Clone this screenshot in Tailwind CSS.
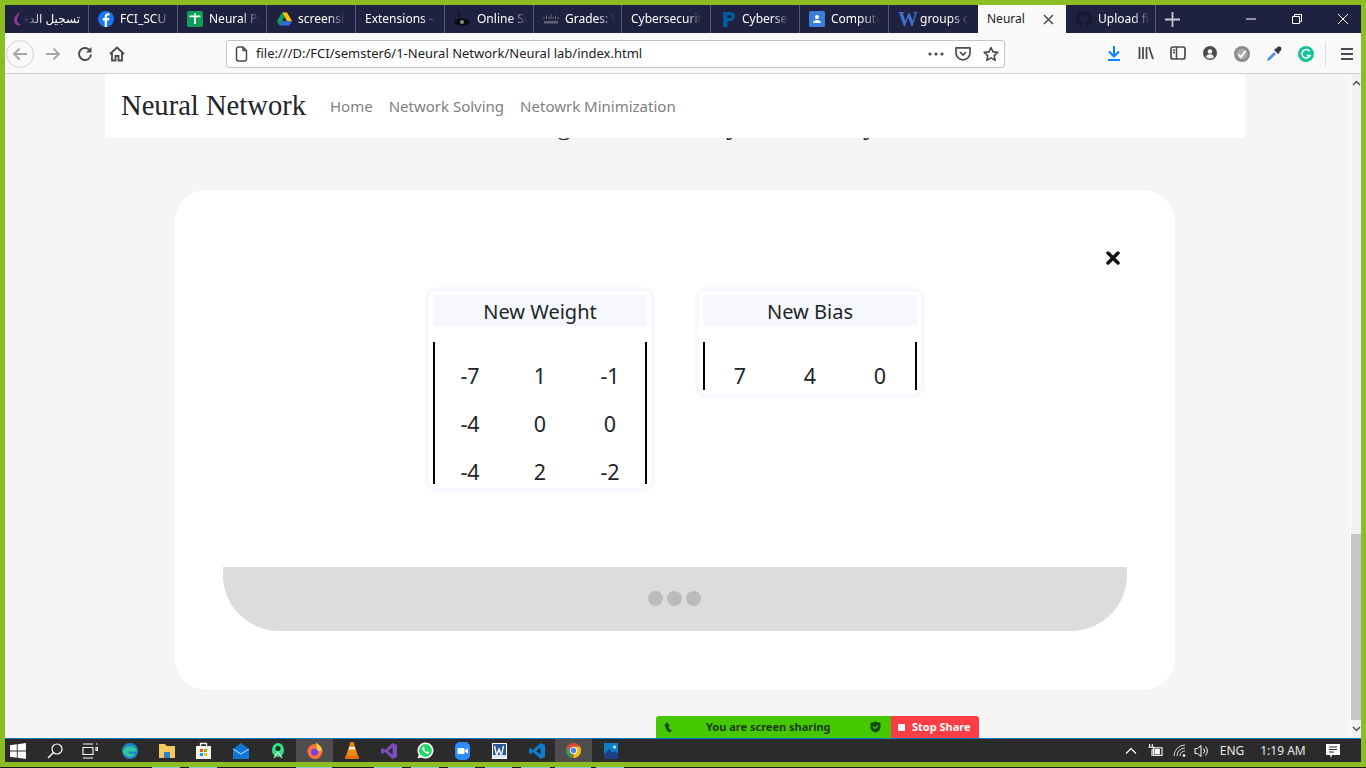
<!DOCTYPE html>
<html lang="en">
<head>
  <meta charset="UTF-8" />
  <title>Neural Network</title>
  <script src="https://cdn.jsdelivr.net/npm/@tailwindcss/browser@4"></script>
</head>
<body class="bg-[#8cbd22] overflow-hidden font-['Noto_Sans','DejaVu_Sans',sans-serif]">
<div class="w-[1366px] h-[768px] flex flex-col pt-[5px] px-[5px]">

  <!-- tabs -->
  <div class="h-[28px] bg-[#1f2141] flex text-white text-[12px] shrink-0">
    <div class="w-[84px] flex items-center border-r border-[#5a5c75] pl-[7px]">
      <svg width="11" height="16" viewBox="0 0 11 16"><path d="M8 1 C3 4 1 8 3 12 C4 15 8 15 9 13 C7 13 5 12 5 9 C5 6 7 4 8 1Z" fill="#8e3f97"/></svg>
      <span class="w-[57px] whitespace-nowrap overflow-hidden text-right [mask-image:linear-gradient(to_left,black_65%,transparent)]" dir="rtl">تسجيل الدخول</span>
    </div>
    <div class="w-[89px] flex items-center border-r border-[#5a5c75] pl-[9px] gap-[6px]">
      <svg width="16" height="16" viewBox="0 0 16 16"><circle cx="8" cy="8" r="8" fill="#1877f2"/><path d="M9 16V9.5h2l.4-2.4H9V5.8c0-.8.3-1.2 1.2-1.2h1.2V2.500C11 2.400 10.400 2.300 9.800 2.300 8 2.300 6.700 3.400 6.700 5.500v1.600H4.700v2.400h2V16z" fill="#fff"/></svg>
      <span class="w-[50px] whitespace-nowrap overflow-hidden [mask-image:linear-gradient(to_right,black_70%,transparent)]">FCI_SCU</span>
    </div>
    <div class="w-[89px] flex items-center border-r border-[#5a5c75] pl-[9px] gap-[6px]">
      <svg width="16" height="16" viewBox="0 0 16 16"><rect width="16" height="16" rx="1.500" fill="#0f9d58"/><path d="M2.500 4.500h11v1.800h-4.600V13H7.100V6.300H2.500z" fill="#fff"/><path d="M7.100 2.500h1.800v2H7.100z" fill="#fff"/></svg>
      <span class="w-[50px] whitespace-nowrap overflow-hidden [mask-image:linear-gradient(to_right,black_65%,transparent)]">Neural Project</span>
    </div>
    <div class="w-[89px] flex items-center border-r border-[#5a5c75] pl-[10px] gap-[6px]">
      <svg width="15" height="14" viewBox="0 0 15 14"><path d="M5 0.500h5L15 9h-5z" fill="#ffc107"/><path d="M5 0.500L0 9l2.500 4.500L7.500 5z" fill="#0f9d58"/><path d="M2.500 13.500h10L15 9H5z" fill="#2f6fe0"/></svg>
      <span class="w-[47px] whitespace-nowrap overflow-hidden [mask-image:linear-gradient(to_right,black_65%,transparent)]">screenshot</span>
    </div>
    <div class="w-[89px] flex items-center border-r border-[#5a5c75] pl-[9px]">
      <span class="w-[70px] whitespace-nowrap overflow-hidden [mask-image:linear-gradient(to_right,black_80%,transparent)]">Extensions – Add</span>
    </div>
    <div class="w-[89px] flex items-center border-r border-[#5a5c75] pl-[9px] gap-[7px]">
      <svg width="16" height="16" viewBox="0 0 16 16"><path d="M4 1c1-1 2 0 2 1v7H4z" fill="#15162c"/><ellipse cx="8" cy="11" rx="8" ry="3.500" fill="#0b0b0d"/><circle cx="8" cy="11" r="2" fill="#888"/></svg>
      <span class="w-[50px] whitespace-nowrap overflow-hidden [mask-image:linear-gradient(to_right,black_65%,transparent)]">Online Surveys</span>
    </div>
    <div class="w-[88px] flex items-center border-r border-[#5a5c75] pl-[9px] gap-[6px]">
      <svg width="16" height="10" viewBox="0 0 16 10"><path d="M1 3v2M3.500 1.500v3.500M6 3v2M8 .5v4.500M10 3v2M12.500 1.500v3.500M15 3v2" stroke="#6d6f85" stroke-width="1"/><rect x="1" y="7" width="14" height="2.500" fill="#5e6078"/></svg>
      <span class="w-[50px] whitespace-nowrap overflow-hidden [mask-image:linear-gradient(to_right,black_65%,transparent)]">Grades: Week</span>
    </div>
    <div class="w-[89px] flex items-center border-r border-[#5a5c75] pl-[9px]">
      <span class="w-[70px] whitespace-nowrap overflow-hidden [mask-image:linear-gradient(to_right,black_80%,transparent)]">Cybersecurity</span>
    </div>
    <div class="w-[89px] flex items-center border-r border-[#5a5c75] pl-[11px] gap-[6px]">
      <svg width="14" height="15" viewBox="0 0 14 15"><path d="M1 0h7c3.500 0 5 2 5 4.500S11 9 8 9H5.500v6H1z M5.500 3v3H8c1 0 1.500-.7 1.500-1.500S9 3 8 3z" fill="#005c9e" fill-rule="evenodd"/></svg>
      <span class="w-[47px] whitespace-nowrap overflow-hidden [mask-image:linear-gradient(to_right,black_65%,transparent)]">Cybersecurity</span>
    </div>
    <div class="w-[89px] flex items-center border-r border-[#5a5c75] pl-[9px] gap-[6px]">
      <svg width="16" height="16" viewBox="0 0 16 16"><rect width="16" height="16" rx="1.500" fill="#3b7ddd"/><circle cx="8" cy="6" r="2" fill="#fff"/><path d="M4 12c0-2 2-3 4-3s4 1 4 3z" fill="#fff"/></svg>
      <span class="w-[48px] whitespace-nowrap overflow-hidden [mask-image:linear-gradient(to_right,black_65%,transparent)]">Computer</span>
    </div>
    <div class="w-[89px] flex items-center pl-[9px] gap-[6px]">
      <span class="w-[16px] text-[20px] leading-none font-bold text-[#3f72cf] font-['Liberation_Serif',serif]">W</span>
      <span class="w-[48px] whitespace-nowrap overflow-hidden [mask-image:linear-gradient(to_right,black_65%,transparent)]">groups on</span>
    </div>
    <div class="w-[88px] flex items-center justify-between bg-[#f9f9fa] text-[#1c1b22] pl-[9px] pr-[12px]">
      <span>Neural</span>
      <svg width="11" height="11" viewBox="0 0 11 11"><path d="M1 1l9 9M10 1l-9 9" stroke="#4a4a4f" stroke-width="1.500"/></svg>
    </div>
    <div class="w-[90px] flex items-center border-r border-[#5a5c75] pl-[10px] gap-[6px]">
      <svg width="16" height="16" viewBox="0 0 16 16"><path d="M8 0a8 8 0 0 0-2.500 15.600c.4.1.5-.2.5-.4v-1.400c-2.200.5-2.700-1-2.700-1-.4-.9-.9-1.200-.9-1.200-.7-.5.1-.5.1-.5.8.1 1.200.8 1.200.8.7 1.200 1.900.9 2.300.7.1-.5.300-.9.500-1.100-1.800-.2-3.600-.9-3.600-4 0-.9.300-1.600.8-2.100-.1-.2-.4-1 .1-2.100 0 0 .7-.2 2.200.8a7.500 7.500 0 0 1 4 0c1.500-1 2.200-.8 2.200-.8.4 1.100.2 1.900.1 2.100.5.600.8 1.300.8 2.100 0 3.100-1.900 3.700-3.700 3.900.3.300.6.800.6 1.500v2.200c0 .2.100.5.600.4A8 8 0 0 0 8 0z" fill="#15162c"/></svg>
      <span class="w-[52px] whitespace-nowrap overflow-hidden [mask-image:linear-gradient(to_right,black_65%,transparent)]">Upload files</span>
    </div>
    <div class="flex-1 flex items-center pl-[9px]">
      <svg width="15" height="15" viewBox="0 0 15 15"><path d="M7.500 0v15M0 7.500h15" stroke="#c9cad4" stroke-width="1.800"/></svg>
      <div class="ml-auto -mr-[5px] flex items-center">
        <svg class="w-[46px]" width="46" height="10" viewBox="0 0 46 10"><path d="M18 5h10" stroke="#fff" stroke-width="1"/></svg>
        <svg class="w-[46px]" width="46" height="10" viewBox="0 0 46 10"><path d="M18.500 2.500h7v7h-7zM20.500 2.500V.5h7v7h-2" fill="none" stroke="#fff" stroke-width="1"/></svg>
        <svg class="w-[46px]" width="46" height="10" viewBox="0 0 46 10"><path d="M18 0l10 10M28 0L18 10" stroke="#fff" stroke-width="1"/></svg>
      </div>
    </div>
  </div>

  <!-- toolbar -->
  <div class="h-[41px] pt-[1px] bg-[#f9f9fa] border-b border-[#cfcfd0] flex items-center shrink-0 text-[#4a4a4f]">
    <div class="ml-px w-[28px] h-[28px] rounded-full border border-[#d2d2d2] flex items-center justify-center">
      <svg width="16" height="14" viewBox="0 0 16 14"><path d="M15 7H2M7.500 1.500L2 7l5.500 5.500" fill="none" stroke="#a6a6a8" stroke-width="1.800"/></svg>
    </div>
    <div class="ml-[3px] w-[32px] flex justify-center">
      <svg width="16" height="14" viewBox="0 0 16 14"><path d="M1 7h13M8.500 1.500L14 7l-5.500 5.500" fill="none" stroke="#a6a6a8" stroke-width="1.800"/></svg>
    </div>
    <div class="w-[32px] flex justify-center">
      <svg width="16" height="16" viewBox="0 0 16 16"><path d="M14 8.500a6 6 0 1 1-2-5" fill="none" stroke="#4a4a4f" stroke-width="2"/><path d="M14.500 1v5.500H9z" fill="#4a4a4f"/></svg>
    </div>
    <div class="w-[32px] flex justify-center">
      <svg width="16" height="16" viewBox="0 0 16 16"><path d="M1 8l7-6.500L15 8M3 7v7.500h3.500V10h3v4.500H13V7" fill="none" stroke="#4a4a4f" stroke-width="1.800"/></svg>
    </div>
    <div class="ml-[93px] w-[779px] h-[28px] bg-white border border-[#c4c4c5] rounded-[3px] flex items-center pl-[8px] pr-[5px]">
      <svg width="13" height="16" viewBox="0 0 13 16"><path d="M1.500 3a2 2 0 0 1 2-2h4.500l3.500 3.500V13a2 2 0 0 1-2 2h-6a2 2 0 0 1-2-2z M8 1v3.500h3.500" fill="none" stroke="#4a4a4f" stroke-width="1.500"/></svg>
      <span class="ml-[8px] text-[13px] pt-[1px] text-[#1c1b22] whitespace-nowrap">file:///D:/FCI/semster6/1-Neural Network/Neural lab/index.html</span>
      <svg class="ml-auto" width="16" height="4" viewBox="0 0 16 4"><circle cx="2" cy="2" r="1.600" fill="#4a4a4f"/><circle cx="8" cy="2" r="1.600" fill="#4a4a4f"/><circle cx="14" cy="2" r="1.600" fill="#4a4a4f"/></svg>
      <svg class="ml-[11px]" width="16" height="15" viewBox="0 0 16 15"><path d="M1 1.800h14v5a7 7 0 0 1-14 0z" fill="none" stroke="#4a4a4f" stroke-width="1.700" stroke-linejoin="round"/><path d="M5 6l3 3 3-3" fill="none" stroke="#4a4a4f" stroke-width="1.700"/></svg>
      <svg class="ml-[12px]" width="16" height="16" viewBox="0 0 16 16"><path d="M8 1.500l2 4.400 4.800.5-3.600 3.200 1 4.700L8 11.900l-4.200 2.400 1-4.700L1.200 6.400 6 5.900z" fill="none" stroke="#4a4a4f" stroke-width="1.600" stroke-linejoin="round"/></svg>
    </div>
    <div class="ml-[93px] flex">
      <div class="w-[32px] flex justify-center"><svg width="14" height="15" viewBox="0 0 14 15"><path d="M7 0v9.500M2 5.500l5 5 5-5M1 14h12" fill="none" stroke="#0a84ff" stroke-width="2"/></svg></div>
      <div class="w-[32px] flex justify-center"><svg width="16" height="14" viewBox="0 0 16 14"><path d="M1.500 1v12M5 1v12M8.500 1v12M11 1l4 12" fill="none" stroke="#4a4a4f" stroke-width="1.800"/></svg></div>
      <div class="w-[32px] flex justify-center"><svg width="16" height="14" viewBox="0 0 16 14"><rect x="1" y="1" width="14" height="12" rx="2" fill="none" stroke="#4a4a4f" stroke-width="1.700"/><path d="M6.500 1v12M3 4h2M3 6.500h2" stroke="#4a4a4f" stroke-width="1.500"/></svg></div>
      <div class="w-[32px] flex justify-center"><svg width="14" height="14" viewBox="0 0 14 14"><circle cx="7" cy="7" r="7" fill="#4a4a4f"/><circle cx="7" cy="5.500" r="2.300" fill="#f9f9fa"/><path d="M2.800 11c.6-2 2.400-2.800 4.200-2.800s3.600.8 4.200 2.800A6 6 0 0 1 7 12.500 6 6 0 0 1 2.800 11z" fill="#f9f9fa"/></svg></div>
      <div class="w-[32px] flex justify-center"><svg width="16" height="16" viewBox="0 0 16 16"><circle cx="8" cy="8" r="8" fill="#8a8a8c"/><circle cx="8" cy="8" r="5.500" fill="#a9a9ab"/><path d="M4.500 8.500l2.500 2.500 4.500-6" fill="none" stroke="#fff" stroke-width="2"/></svg></div>
      <div class="w-[32px] flex justify-center"><svg width="16" height="16" viewBox="0 0 16 16"><path d="M1 15l1-3 6-6 2 2-6 6z" fill="#4f8fe6"/><path d="M9 3l4 4" stroke="#33333a" stroke-width="2.500"/><circle cx="13" cy="3" r="2.400" fill="#33333a"/></svg></div>
      <div class="w-[32px] flex justify-center"><svg width="16" height="16" viewBox="0 0 16 16"><circle cx="8" cy="8" r="8" fill="#15c39a"/><path d="M11.500 5.200A4.200 4.200 0 1 0 12 9.500H8.800" fill="none" stroke="#fff" stroke-width="1.600"/></svg></div>
    </div>
    <div class="ml-[3px] w-px h-[24px] bg-[#dcdcdc]"></div>
    <div class="ml-[15px] flex flex-col gap-[3px]">
      <div class="w-[12px] h-[2px] bg-[#4a4a4f]"></div>
      <div class="w-[12px] h-[2px] bg-[#4a4a4f]"></div>
      <div class="w-[12px] h-[2px] bg-[#4a4a4f]"></div>
    </div>
  </div>

  <!-- page -->
  <div class="h-[664px] flex shrink-0 relative overflow-hidden">
    <div class="w-[1345px] bg-[#f5f5f5] overflow-hidden relative">
      <!-- heading scrolled under the navbar -->
      <div class="absolute top-[34px] left-[552px] flex font-['Liberation_Serif',serif] text-[28px] leading-[34px] text-[#212529]">
        <span>g</span><span class="ml-[155px]">y</span><span class="ml-[123px]">y</span>
      </div>
      <nav class="relative ml-[100px] w-[1140px] h-[64px] bg-white flex items-center pl-[16px]">
        <span class="font-['Liberation_Serif',serif] text-[28.6px] text-[#212529] w-[209px] whitespace-nowrap">Neural Network</span>
        <div class="flex gap-[16px] text-[15px] text-[#808080]">
          <span>Home</span>
          <span>Network Solving</span>
          <span>Netowrk Minimization</span>
        </div>
      </nav>
      <div class="mt-[52px] ml-[170px] w-[1000px] h-[500px] bg-white rounded-[32px] pt-[58px] pb-[59px] px-[48px] flex flex-col">
        <div class="h-[20px] flex items-center justify-end pr-[6px]">
          <svg width="16" height="16" viewBox="0 0 16 16"><path d="M3 3l10 10M13 3L3 13" stroke="#111" stroke-width="3.500" stroke-linecap="round"/></svg>
        </div>
        <div class="mt-[19px] ml-[202px] flex items-start gap-[40px] text-[20px] text-[#212529]">
          <div class="w-[230px] border-[4px] border-[#f8f8ff] rounded-[12px] p-[4px]">
            <div class="h-[31px] pt-[2px] bg-[#f7f8fd] flex items-center justify-center">New Weight</div>
            <div class="mt-[16px] h-[142px] border-x-2 border-black pt-[22px] grid grid-cols-3 gap-y-[24px] leading-[24px] text-[21.5px] text-center content-start">
              <span>-7</span><span>1</span><span>-1</span>
              <span>-4</span><span>0</span><span>0</span>
              <span>-4</span><span>2</span><span>-2</span>
            </div>
          </div>
          <div class="w-[230px] border-[4px] border-[#f8f8ff] rounded-[12px] p-[4px]">
            <div class="h-[31px] pt-[2px] bg-[#f7f8fd] flex items-center justify-center">New Bias</div>
            <div class="mt-[16px] h-[48px] border-x-2 border-black pt-[22px] grid grid-cols-3 leading-[24px] text-[21.5px] text-center content-start">
              <span>7</span><span>4</span><span>0</span>
            </div>
          </div>
        </div>
        <div class="mt-auto h-[64px] pb-[2px] bg-[#dcdcdc] rounded-b-[56px] flex items-center justify-center gap-[4px] pr-[1px]">
          <span class="w-[15px] h-[15px] rounded-full bg-[#bbbbbb]"></span>
          <span class="w-[15px] h-[15px] rounded-full bg-[#bbbbbb]"></span>
          <span class="w-[15px] h-[15px] rounded-full bg-[#bbbbbb]"></span>
        </div>
      </div>
    </div>
    <!-- scrollbar -->
    <div class="w-[11px] bg-[#f1f1f1] border-l border-white flex flex-col">
      <div class="h-[460px] pt-[6px] flex justify-center"><svg width="9" height="6" viewBox="0 0 9 6"><path d="M1 5l3.500-3.500L8 5" fill="none" stroke="#505050" stroke-width="1.500"/></svg></div>
      <div class="h-[186px] bg-[#c6c6c6]"></div>
      <div class="flex-1 flex items-center justify-center"><svg width="9" height="6" viewBox="0 0 9 6"><path d="M1 1l3.500 3.500L8 1" fill="none" stroke="#505050" stroke-width="1.500"/></svg></div>
    </div>
    <!-- zoom share bar -->
    <div class="absolute left-[651px] bottom-0 w-[323px] h-[22px] rounded-t-[3px] overflow-hidden flex text-[11px] font-bold">
      <div class="w-[235px] bg-[#46c800] flex items-center pl-[7px] text-[#173d10]">
        <svg width="10" height="12" viewBox="0 0 10 12"><path d="M1 5l3-4 3 4H5.500c0 2 1 3.500 3.500 4.500L7 11.500C4 10.500 2.500 8 2.500 5z" fill="#0e4a0a"/></svg>
        <span class="ml-[33px] w-[164px]">You are screen sharing</span>
        <svg width="11" height="12" viewBox="0 0 11 12"><path d="M5.500 0.500L10.500 2v4c0 3-2.500 5-5 5.500-2.500-.5-5-2.500-5-5.500V2z" fill="#0e4a0a"/><path d="M3 5.500l2 2 3-3" fill="none" stroke="#46c800" stroke-width="1.200"/></svg>
      </div>
      <div class="flex-1 bg-[#fb3d45] flex items-center pl-[7px] text-white gap-[7px]">
        <span class="w-[7px] h-[7px] bg-white rounded-[1px]"></span>
        <span>Stop Share</span>
      </div>
    </div>
  </div>

  <!-- taskbar -->
  <div class="h-[24px] bg-[#2b2b2b] border-t border-[#0078c8] flex items-center shrink-0 text-white">
    <div class="w-[26px] flex justify-center"><svg width="16" height="16" viewBox="0 0 16 16"><path d="M0 2.300l6.800-1v6.300H0zM7.700 1.200L16 0v7.600H7.700zM0 8.400h6.800v6.300l-6.800-1zM7.700 8.400H16V16l-8.300-1.200z" fill="#fff"/></svg></div>
    <div class="ml-[8px] w-[32px] flex justify-center"><svg width="16" height="16" viewBox="0 0 16 16"><circle cx="10" cy="6" r="5" fill="none" stroke="#fff" stroke-width="1.200"/><path d="M6.500 9.500L1 15" stroke="#fff" stroke-width="1.500"/></svg></div>
    <div class="ml-[1px] w-[36px] flex justify-center"><svg width="16" height="16" viewBox="0 0 16 16"><path d="M1 1h10M1 15h10M1 4.500h10v7H1zM14 1h1.500M14 4.500h1.500v3H14z" fill="none" stroke="#fff" stroke-width="1.100"/></svg></div>
    <div class="ml-[3px] w-[37px] flex justify-center"><svg width="16" height="16" viewBox="0 0 16 16"><circle cx="8" cy="8" r="8" fill="#1c8ac9"/><path d="M1 9c1-4 4-5.500 7-5.500S15 5.500 14.500 8.500H6c.3 2 3 3.500 7 2-1.500 3-5 4-7 3S2 11 1 9z" fill="#37c5a0"/></svg></div>
    <div class="w-[37px] flex justify-center"><svg width="16" height="14" viewBox="0 0 16 14"><path d="M0 0h6l1.500 2H16v12H0z" fill="#f7c95c"/><rect x="5" y="8" width="6" height="6" fill="#2a84c9"/></svg></div>
    <div class="w-[37px] flex justify-center"><svg width="15" height="17" viewBox="0 0 15 17"><path d="M0 4h15v13H0z" fill="#f3f3f3"/><path d="M4.500 4V1.500h6V4" fill="none" stroke="#f3f3f3" stroke-width="1.300"/><rect x="4" y="7" width="3" height="3" fill="#f25022"/><rect x="8" y="7" width="3" height="3" fill="#7fba00"/><rect x="4" y="11" width="3" height="3" fill="#00a4ef"/><rect x="8" y="11" width="3" height="3" fill="#ffb900"/></svg></div>
    <div class="w-[37px] flex justify-center"><svg width="16" height="16" viewBox="0 0 16 16"><path d="M0 6l8-6 8 6v10H0z" fill="#0f78d4"/><path d="M0 6l8 5 8-5" fill="none" stroke="#bfe3ff" stroke-width="1"/></svg></div>
    <div class="w-[37px] flex justify-center"><svg width="14" height="17" viewBox="0 0 14 17"><ellipse cx="7" cy="8" rx="6" ry="7" fill="#3ddc84"/><circle cx="7" cy="6.500" r="2.500" fill="#0d3b2a"/><path d="M3 16l4-6 4 6" fill="none" stroke="#cfe" stroke-width="1.200"/></svg></div>
    <div class="w-[37px] h-full bg-[#4e4e4e] flex justify-center items-center"><svg width="16" height="17" viewBox="0 0 16 17"><circle cx="8" cy="9.500" r="7.500" fill="#ff7139"/><path d="M9 0c2 3 6 4 6 9h-5z" fill="#ffcf3f"/><circle cx="7.500" cy="10" r="3.500" fill="#7542e5"/></svg></div>
    <div class="w-[37px] flex justify-center"><svg width="14" height="17" viewBox="0 0 14 17"><path d="M5.500 0h3L13 14H1z" fill="#f08a10"/><path d="M4.300 5h5.400l.7 2.500H3.600z" fill="#fff"/><rect x="0" y="14" width="14" height="3" fill="#e56a00"/></svg></div>
    <div class="w-[37px] flex justify-center"><svg width="16" height="16" viewBox="0 0 16 16"><path d="M11.500 0L16 2v12l-4.500 2L4 9 1.500 11 0 10V6l1.500-1L4 7zM11.500 4.500L7 8l4.500 3.500z" fill="#7c4dbd" fill-rule="evenodd"/></svg></div>
    <div class="w-[37px] flex justify-center"><svg width="17" height="17" viewBox="0 0 17 17"><path d="M8.500 0.500a8 8 0 0 0-6.800 12.200L.5 16.500l3.900-1.100A8 8 0 1 0 8.500.5z" fill="#fff"/><circle cx="8.500" cy="8.500" r="6.400" fill="#25d366"/><path d="M6 4.800c-1 .8-1 2.300 0 3.800s2.700 3 4.300 3.200c1.200.1 2-.8 2-1.500l-1.900-1-.8.800c-1-.3-2-1.400-2.500-2.500l.7-.8-.9-1.900z" fill="#fff"/></svg></div>
    <div class="w-[37px] flex justify-center"><svg width="15" height="18" viewBox="0 0 15 18"><rect width="15" height="18" rx="5" fill="#2d8cff"/><rect x="2.500" y="6" width="7" height="6" rx="1" fill="#fff"/><path d="M10 8.200l3-2v5.600l-3-2z" fill="#fff"/></svg></div>
    <div class="w-[37px] flex justify-center"><svg width="15" height="16" viewBox="0 0 15 16"><rect width="15" height="16" fill="#fff"/><rect x="1" y="1" width="13" height="14" fill="#2b579a"/><rect x="1" y="12" width="13" height="3" fill="#dbe6f5"/><path d="M2.500 3l1.800 8h1l1.700-5 1.700 5h1l1.800-8" fill="none" stroke="#fff" stroke-width="1.300"/></svg></div>
    <div class="w-[37px] flex justify-center"><svg width="16" height="16" viewBox="0 0 16 16"><path d="M11.500 0L16 2v12l-4.500 2L4 9 1.500 11 0 10V6l1.500-1L4 7zM11.500 4.500L7 8l4.500 3.500z" fill="#0e7fd0" fill-rule="evenodd"/></svg></div>
    <div class="w-[37px] h-full bg-[#4e4e4e] flex justify-center items-center"><svg width="15" height="15" viewBox="0 0 15 15"><circle cx="7.500" cy="7.500" r="7.500" fill="#dd4b39"/><path d="M7.500 15A7.500 7.500 0 0 1 1 3.800L5 10.500z" fill="#2f9e4f"/><path d="M7.500 15a7.500 7.500 0 0 0 6.500-11.200H7.500z" fill="#f4c20d"/><circle cx="7.500" cy="7.500" r="3.600" fill="#fff"/><circle cx="7.500" cy="7.500" r="2.700" fill="#4285f4"/></svg></div>
    <div class="w-[37px] flex justify-center"><svg width="14" height="16" viewBox="0 0 14 16"><rect width="14" height="16" fill="#0f7fc9"/><path d="M0 16V11l5-5 4 4 2-2 3 3v5z" fill="#1c3f86"/><circle cx="10.500" cy="4" r="1.500" fill="#cfeaff"/></svg></div>

    <div class="ml-auto flex items-center text-[12px] text-[#e8e8e8]">
      <svg class="mr-[10px]" width="12" height="7" viewBox="0 0 12 7"><path d="M1 6.500L6 1.500l5 5" fill="none" stroke="#fff" stroke-width="1.200"/></svg>
      <svg class="mr-[10px]" width="16" height="13" viewBox="0 0 14 12"><path d="M2 0v3M4.500 0v3M1 3h5v2.500H4.200V11" fill="none" stroke="#fff" stroke-width="1"/><rect x="5.500" y="3.500" width="8" height="7" fill="#2b2b2b" stroke="#fff"/><rect x="6.500" y="4.500" width="5" height="5" fill="#fff"/></svg>
      <svg class="mr-[8px]" width="13" height="13" viewBox="0 0 13 13"><path d="M1 12A11 11 0 0 1 12 1M4 12A8 8 0 0 1 12 4M7 12a5 5 0 0 1 5-5" fill="none" stroke="#d8d8d8" stroke-width="1"/><circle cx="11" cy="11.500" r="1.300" fill="#fff"/></svg>
      <svg class="mr-[10px]" width="15" height="14" viewBox="0 0 15 14"><path d="M1 4.500h2.500L7 1.500v11L3.500 9.500H1z" fill="none" stroke="#fff" stroke-width="1"/><path d="M9.500 4.500a3.500 3.500 0 0 1 0 5M11.500 2.500a6.500 6.500 0 0 1 0 9" fill="none" stroke="#fff" stroke-width="1"/></svg>
      <span class="w-[26px] text-center">ENG</span>
      <span class="ml-[14px] w-[48px] text-center">1:19 AM</span>
      <svg class="ml-[18px] mr-[20px]" width="16" height="16" viewBox="0 0 16 16"><path d="M1 1h14v11H7l-1 3-1-3H1z" fill="#fff"/><path d="M4 4h8M4 6.500h8M4 9h5" stroke="#2b2b2b" stroke-width="1"/></svg>
    </div>
  </div>
  <div class="h-[5px] shrink-0"></div>
  <!-- what shows of the window behind, one pixel -->
  <div class="h-px -mx-[5px] bg-[#1d1d1d] flex shrink-0">
    <span class="ml-[152px] w-[28px] bg-[#8fc8d8]"></span>
    <span class="ml-[9px] w-[28px] bg-[#8fc8d8]"></span>
    <span class="ml-[79px] w-[36px] bg-[#8fc8d8]"></span>
    <span class="ml-[42px] w-[28px] bg-[#8fc8d8]"></span>
    <span class="ml-[9px] w-[28px] bg-[#8fc8d8]"></span>
    <span class="ml-[9px] w-[27px] bg-[#8fc8d8]"></span>
    <span class="ml-[10px] w-[27px] bg-[#8fc8d8]"></span>
    <span class="ml-[9px] w-[29px] bg-[#8fc8d8]"></span>
    <span class="ml-[5px] w-[36px] bg-[#8fc8d8]"></span>
    <span class="ml-[5px] w-[28px] bg-[#8fc8d8]"></span>
  </div>
</div>
</body>
</html>
